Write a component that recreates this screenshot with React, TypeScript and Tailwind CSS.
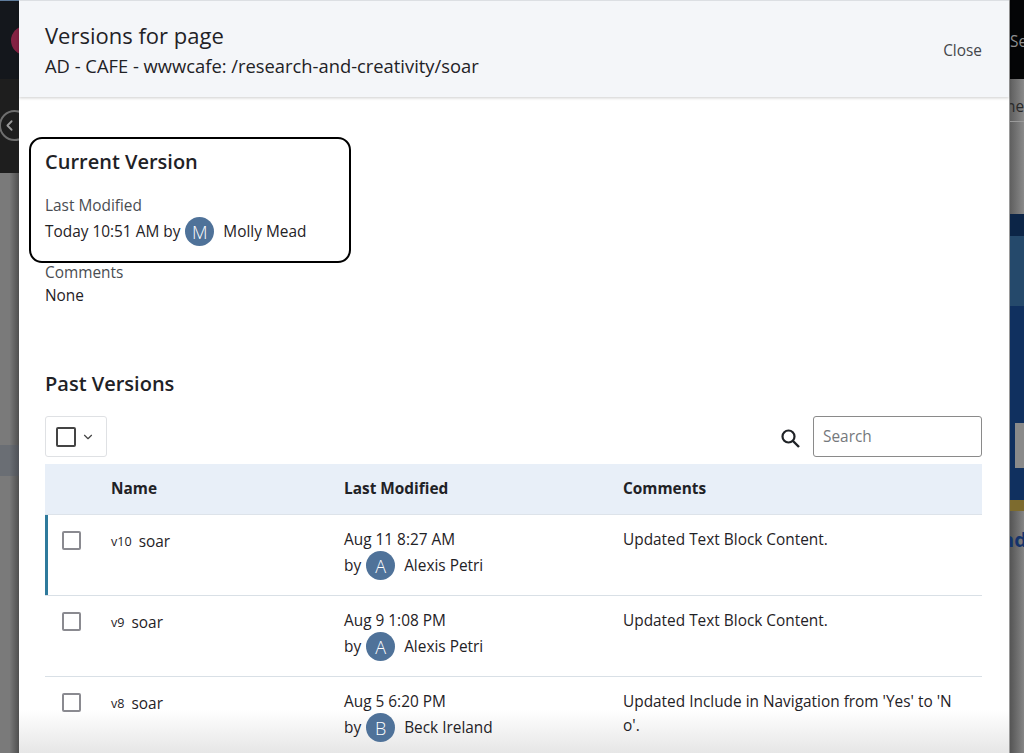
import { ChevronDown, ChevronLeft } from "lucide-react";

type Version = {
  tag: string;
  modified: string;
  initial: string;
  author: string;
  comment: string;
  current?: boolean;
};

const versions: Version[] = [
  { tag: "v10", modified: "Aug 11 8:27 AM", initial: "A", author: "Alexis Petri", comment: "Updated Text Block Content.", current: true },
  { tag: "v9", modified: "Aug 9 1:08 PM", initial: "A", author: "Alexis Petri", comment: "Updated Text Block Content." },
  { tag: "v8", modified: "Aug 5 6:20 PM", initial: "B", author: "Beck Ireland", comment: "Updated Include in Navigation from 'Yes' to 'No'." },
];

function Avatar({ letter }: { letter: string }) {
  return (
    <span className="flex h-[29px] w-[29px] shrink-0 items-center justify-center rounded-full bg-[#4f7299] text-[18px] font-light leading-none text-white">
      {letter}
    </span>
  );
}

function Row({ version }: { version: Version }) {
  return (
    <div className="flex h-[81px] shrink-0 border-b border-[#d9e0e6]">
      <div className={`w-[3px] shrink-0 ${version.current ? "bg-[#2f7a9c]" : ""}`} />
      <div className="w-[63px] shrink-0 pl-[14px] pt-[16px]">
        <div className="h-[19px] w-[19px] rounded-[2px] border-2 border-[#8a8a90]" />
      </div>
      <div className="flex w-[233px] shrink-0 items-baseline pt-[15px] leading-[24px]">
        <span className="relative -top-[1px] mr-[7px] text-[12.6px]">{version.tag}</span>
        <span>soar</span>
      </div>
      <div className="w-[279px] shrink-0 pt-[13px]">
        <div className="leading-[24px]">{version.modified}</div>
        <div className="-mt-[1px] flex items-center leading-[24px]">
          <span className="mr-[5px]">by</span>
          <Avatar letter={version.initial} />
          <span className="ml-[9px]">{version.author}</span>
        </div>
      </div>
      <div className="w-[333px] shrink-0 break-all pt-[13px] leading-[24px]">{version.comment}</div>
    </div>
  );
}

export default function App() {
  return (
    <div className="relative flex h-[753px] w-[1024px] overflow-hidden bg-[#777] font-['Open_Sans',sans-serif] text-[15.4px] text-[#1f2226]">
      {/* page behind the dialog */}
      <div className="flex w-[19px] shrink-0 flex-col overflow-hidden">
        <div className="h-[79px] shrink-0 border-t border-[#5f7c9c] bg-[#14171c] pl-[11px] pt-[25px]">
          <div className="h-[29px] w-[29px] rounded-full bg-[#842243]" />
        </div>
        <div className="flex h-[94px] shrink-0 items-center bg-[#1e1e1e] pb-[2px]">
          <div className="-ml-[1px] flex h-[31px] w-[31px] shrink-0 items-center justify-center rounded-full border-2 border-[#6f6f6f]">
            <ChevronLeft size={17} strokeWidth={2.5} className="mr-[10px] text-[#9a9a9a]" />
          </div>
        </div>
        <div className="flex flex-1 flex-col bg-gradient-to-r from-[#7a7a7a] from-50% to-[#4f4f4f] pt-[272px]">
          <div className="h-[31px] bg-gradient-to-r from-[#6a6e74] from-50% to-[#4e5157]" />
        </div>
      </div>

      {/* dialog */}
      <div className="relative flex w-[990px] shrink-0 flex-col bg-white">
        <div className="absolute inset-x-0 bottom-0 h-[43px] bg-gradient-to-b from-white to-[#e6e6e6]" />
        <div className="relative flex h-[97px] shrink-0 items-start justify-between border-t border-[#dcdfe3] bg-[#f4f6f9] pl-[26px] pr-[27px] shadow-[0_1px_3px_rgba(0,0,0,0.2)]">
          <div className="pt-[18px]">
            <div className="text-[22px] leading-[32px]">Versions for page</div>
            <div className="text-[18.35px] leading-[30px]">AD - CAFE - wwwcafe: /research-and-creativity/soar</div>
          </div>
          <div className="pt-[38px] text-[#44474b]">Close</div>
        </div>

        <div className="relative flex flex-1 flex-col overflow-hidden pl-[26px] pr-[27px]">
          <div className="-ml-[16px] mt-[40px] h-[126px] w-[322px] shrink-0 rounded-[13px] border-[2.5px] border-black pl-[14px] pt-[10px]">
            <div className="text-[20px] font-semibold leading-[26px]">Current Version</div>
            <div className="mb-[1px] mt-[20px] leading-[21px] text-[#4a4d52]">Last Modified</div>
            <div className="flex items-center leading-[24px]">
              <span className="mr-[5px]">Today 10:51 AM by</span>
              <Avatar letter="M" />
              <span className="ml-[9px]">Molly Mead</span>
            </div>
          </div>
          <div className="-mt-[2px] leading-[23px] text-[#4a4d52]">Comments</div>
          <div className="leading-[23px]">None</div>

          <div className="mt-[64px] text-[20px] font-semibold leading-[26px]">Past Versions</div>

          <div className="mt-[19px] flex items-start justify-between">
            <div className="flex h-[41px] w-[62px] items-center rounded-[3px] border border-[#dfe1e4] pl-[10px]">
              <div className="h-[20px] w-[20px] rounded-[2px] border-2 border-[#444]" />
              <ChevronDown size={14} strokeWidth={2} className="ml-[5px] text-[#444]" />
            </div>
            <div className="flex items-center">
              <svg width="24" height="24" viewBox="0 0 24 24" className="mr-[11px] mt-[2px]" fill="none" stroke="#1f2226">
                <circle cx="10.5" cy="10.5" r="6" strokeWidth="2.2" />
                <path d="M15 15l6 6" strokeWidth="2.4" />
              </svg>
              <div className="flex h-[41px] w-[169px] items-center rounded-[3px] border border-[#8a8a8a] pl-[9px] text-[#75787c]">
                Search
              </div>
            </div>
          </div>

          <div className="mt-[7px] flex h-[51px] shrink-0 items-center border-b border-[#dde3ea] bg-[#e8eff8] font-bold">
            <div className="w-[66px] shrink-0" />
            <div className="w-[233px] shrink-0">Name</div>
            <div className="w-[279px] shrink-0">Last Modified</div>
            <div>Comments</div>
          </div>

          {versions.map((v) => (
            <Row key={v.tag} version={v} />
          ))}
        </div>
      </div>

      <div className="flex w-[15px] shrink-0 flex-col overflow-hidden border-l border-[#9a9a9a]">
        <div className="h-[79px] shrink-0 whitespace-nowrap bg-[#040506] pt-[30px] text-[#8f8f8f]">Se</div>
        <div className="h-[135px] shrink-0 bg-gradient-to-r from-[#5f5f5f] to-[#8a8a8a]">
          <div className="-ml-[4px] h-[43px] whitespace-nowrap border-b border-[#9a9a9a] pt-[16px] text-[#2a2a2a]">ne</div>
        </div>
        <div className="flex h-[286px] shrink-0 flex-col bg-[#10305f]">
          <div className="h-[22px] shrink-0 bg-[#0c2547]" />
          <div className="h-[70px] shrink-0 bg-[#25496b]" />
          <div className="ml-[5px] mt-[117px] h-[45px] w-[30px] shrink-0 bg-[#8a8a8a]" />
        </div>
        <div className="h-[11px] shrink-0 bg-[#7d6b2e]" />
        <div className="flex-1 bg-gradient-to-r from-[#555] to-[#858585]">
          <div className="-ml-[9px] whitespace-nowrap pt-[19px] text-[20px] font-bold leading-none text-[#14336b]">nd</div>
        </div>
      </div>
    </div>
  );
}
